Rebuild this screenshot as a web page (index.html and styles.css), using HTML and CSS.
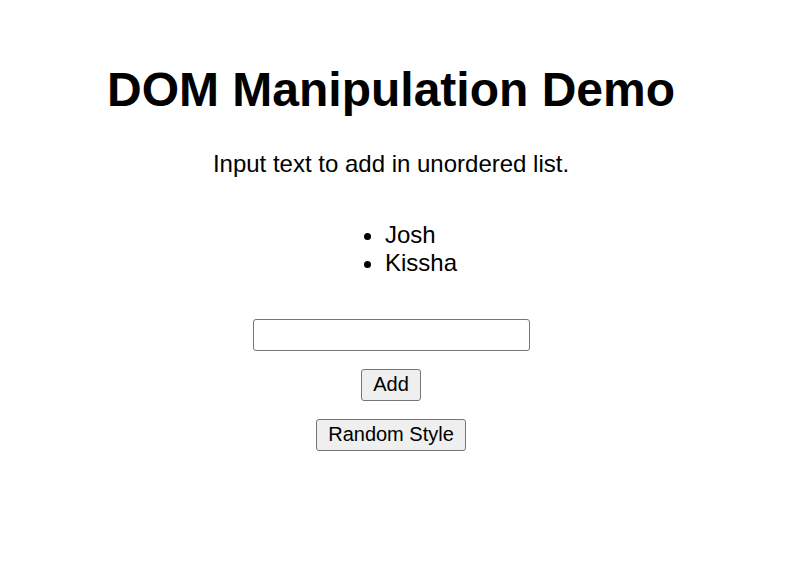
FILE: index.html
```html
<!DOCTYPE html>
<html>
<head>
<meta charset="utf-8">
<link rel="stylesheet" href="styles.css">
</head>
<body>
<main class="page">
  <h1 class="title">DOM Manipulation Demo</h1>
  <p class="intro">Input text to add in unordered list.</p>
  <ul class="list">
    <li>Josh</li>
    <li>Kissha</li>
  </ul>
  <input class="field" type="text">
  <button class="btn btn-add">Add</button>
  <button class="btn btn-random">Random Style</button>
</main>
</body>
</html>
```
FILE: styles.css
```css
html, body {
  margin: 0;
  padding: 0;
  background: #ffffff;
}
body {
  font-family: "Liberation Sans", Arial, sans-serif;
  color: #000;
}
.page {
  width: 782px;
  display: flex;
  flex-direction: column;
  align-items: center;
  padding-top: 62px;
}
.title {
  margin: 0;
  font-size: 48px;
  font-weight: bold;
  line-height: 56px;
}
.intro {
  margin: 32px 0 0;
  font-size: 24px;
  line-height: 28px;
}
.list {
  margin: 43px 0 0 20px;
  padding-left: 40px;
  font-size: 24px;
  line-height: 28px;
  text-align: left;
}
.field {
  margin-top: 42px;
  width: 277px;
  height: 32px;
  box-sizing: border-box;
  border: 1px solid #767676;
  border-radius: 3px;
  font-size: 18px;
}
.btn {
  font-family: "Liberation Sans", Arial, sans-serif;
  font-size: 20px;
  height: 32px;
  box-sizing: border-box;
  border: 1px solid #767676;
  border-radius: 3px;
  background: #efefef;
  color: #000;
  padding: 0 11px 2px;
}
.btn-add {
  margin-top: 18px;
}
.btn-random {
  margin-top: 18px;
}
```
